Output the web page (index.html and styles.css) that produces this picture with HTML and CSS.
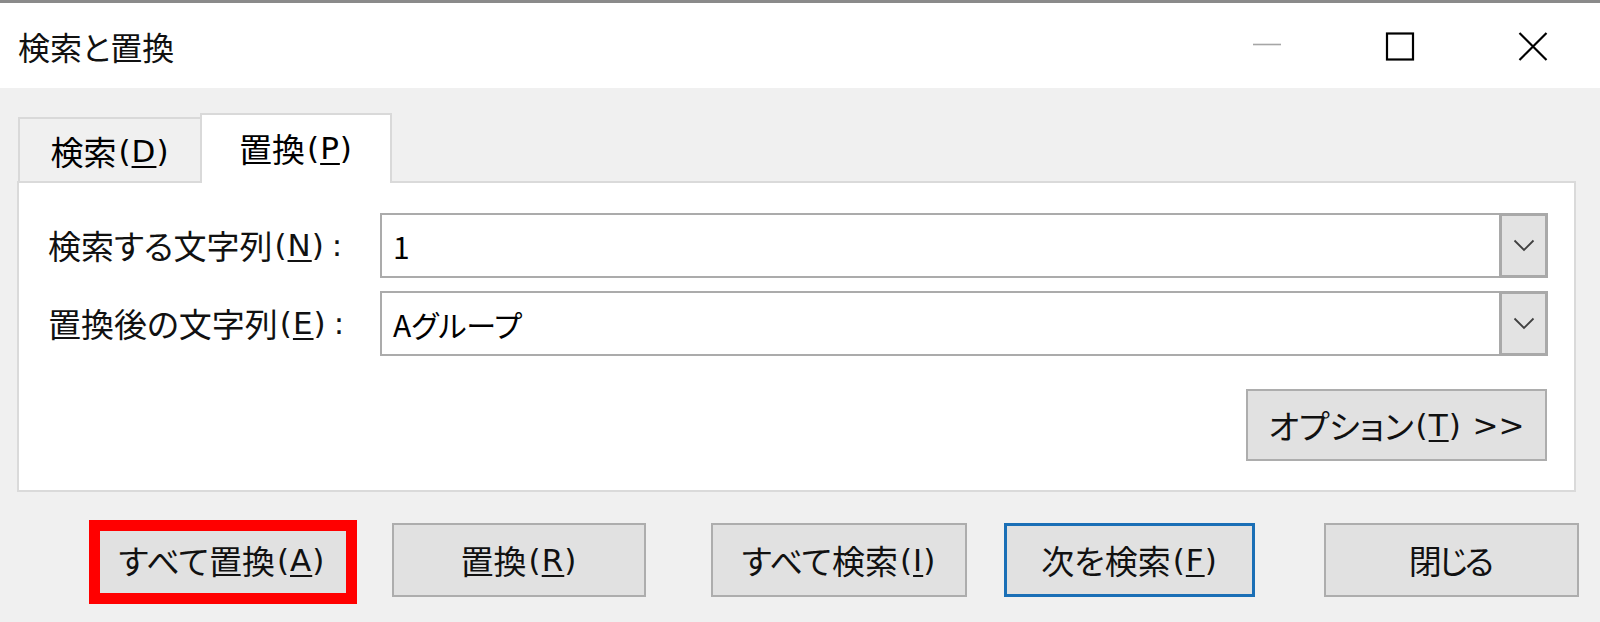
FILE: index.html
```html
<!DOCTYPE html>
<html lang="ja">
<head>
<meta charset="utf-8">
<title>検索と置換</title>
<link rel="stylesheet" href="styles.css">
</head>
<body>
<div class="window">
  <header class="titlebar">
    <div class="title">検索と置換</div>
    <div class="controls">
      <svg class="ctl" viewBox="0 0 30 30" width="30" height="30"><line x1="1" y1="13.5" x2="29" y2="13.5" stroke="#a6a6a6" stroke-width="1.6"/></svg>
      <svg class="ctl" viewBox="0 0 30 30" width="30" height="30"><rect x="2" y="2.5" width="26" height="26" fill="none" stroke="#000" stroke-width="2.2"/></svg>
      <svg class="ctl" viewBox="0 0 30 30" width="30" height="30"><path d="M1.5 2 L28.5 29 M28.5 2 L1.5 29" stroke="#000" stroke-width="2.2" fill="none"/></svg>
    </div>
  </header>
  <main class="content">
    <div class="tabs">
      <div class="tab">検索<span class="key">(<u>D</u>)</span></div>
      <div class="tab tab-active">置換<span class="key">(<u>P</u>)</span></div>
    </div>
    <section class="panel">
      <div class="form">
        <div class="label">検索する文字列<span class="key">(<u>N</u>)<span class="colon">:</span></span></div>
        <div class="combo">
          <div class="combo-text">1</div>
          <div class="combo-btn"><svg viewBox="0 0 22 13" width="22" height="13"><path d="M1.5 1.5 L11 11 L20.5 1.5" fill="none" stroke="#404040" stroke-width="1.8"/></svg></div>
        </div>
        <div class="label">置換後の文字列<span class="key">(<u>E</u>)<span class="colon">:</span></span></div>
        <div class="combo">
          <div class="combo-text">Aグループ</div>
          <div class="combo-btn"><svg viewBox="0 0 22 13" width="22" height="13"><path d="M1.5 1.5 L11 11 L20.5 1.5" fill="none" stroke="#404040" stroke-width="1.8"/></svg></div>
        </div>
      </div>
      <div class="options-row">
        <div class="btn btn-options">オプション<span class="key">(<u>T</u>) <span class="arrows">&gt;&gt;</span></span></div>
      </div>
    </section>
    <div class="actions">
      <div class="btn btn-all-replace highlight">すべて置換<span class="key">(<u>A</u>)</span></div>
      <div class="btn btn-replace">置換<span class="key">(<u>R</u>)</span></div>
      <div class="btn btn-find-all">すべて検索<span class="key">(<u>I</u>)</span></div>
      <div class="btn btn-find-next btn-default">次を検索<span class="key">(<u>F</u>)</span></div>
      <div class="btn btn-close"><span class="tight">閉じる</span></div>
    </div>
  </main>
</div>
</body>
</html>
```

FILE: styles.css
```css
* { box-sizing: border-box; }

html, body {
  margin: 0;
  padding: 0;
}

body {
  font-family: "Noto Sans CJK JP", "Noto Sans", sans-serif;
  font-feature-settings: "palt";
  color: #000;
  background: #f0f0f0;
}

u {
  text-decoration: underline;
  text-decoration-thickness: 2px;
  text-underline-offset: 4px;
}

.key {
  font-family: "DejaVu Sans", "Noto Sans CJK JP", sans-serif;
  font-size: 31px;
  letter-spacing: 1px;
  margin-left: 2px;
}

.colon {
  margin-left: 7px;
}

.arrows {
  letter-spacing: 0;
}

.tight {
  letter-spacing: -3px;
  margin-right: 3px;
}

.window {
  width: 1600px;
  height: 622px;
  border-top: 3px solid #8a8a8a;
  background: #f0f0f0;
  display: flex;
  flex-direction: column;
}

.titlebar {
  height: 85px;
  background: #fff;
  display: flex;
  align-items: center;
  padding-left: 18px;
}

.title {
  font-size: 32px;
  line-height: 1;
  color: #111;
}

.controls {
  margin-left: auto;
  display: flex;
  align-items: center;
  gap: 103px;
  padding-right: 52px;
}

.ctl { display: block; }

.content {
  padding: 25px 0 0 17px;
}

.tabs {
  display: flex;
  align-items: flex-end;
  margin-left: 1px;
}

.tab {
  font-size: 33px;
  line-height: 1;
  height: 64px;
  width: 182px;
  display: flex;
  align-items: center;
  justify-content: center;
  padding-top: 2px;
  border-top: 2px solid #d9d9d9;
  border-left: 2px solid #d9d9d9;
  background: #f0f0f0;
}

.tab-active {
  position: relative;
  z-index: 1;
  width: 192px;
  height: 70px;
  margin-bottom: -2px;
  padding-bottom: 4px;
  background: #fff;
  border-right: 2px solid #d9d9d9;
}

.panel {
  width: 1559px;
  background: #fff;
  border: 2px solid #dadada;
  padding: 30px 26px 29px 29px;
}

.form {
  display: grid;
  grid-template-columns: 332px 1fr;
  grid-auto-rows: 65px;
  row-gap: 13px;
}

.label {
  font-size: 33px;
  line-height: 1;
  display: flex;
  align-items: center;
  color: #111;
}

.combo {
  display: flex;
  border: 2px solid #ababab;
  background: #fff;
}

.combo-text {
  flex: 1;
  display: flex;
  align-items: center;
  padding-left: 11px;
  font-size: 30px;
  line-height: 1;
}

.combo-btn {
  width: 49px;
  margin: -2px -2px -2px 0;
  border: 3px solid #a9a9a9;
  background: #e3e3e3;
  display: flex;
  align-items: center;
  justify-content: center;
}

.combo-btn svg { display: block; }

.options-row {
  display: flex;
  justify-content: flex-end;
  margin-top: 33px;
  padding-right: 1px;
}

.btn {
  font-size: 33px;
  line-height: 1;
  background: #e1e1e1;
  border: 2px solid #adadad;
  display: flex;
  align-items: center;
  justify-content: center;
  color: #111;
}

.btn-options {
  width: 301px;
  height: 72px;
}

.actions {
  display: flex;
  margin-top: 31px;
}

.actions .btn { height: 74px; }

.btn-all-replace { width: 256px; margin-left: 77px; }
.btn-replace { width: 254px; margin-left: 42px; }
.btn-find-all { width: 256px; margin-left: 65px; }
.btn-find-next { width: 251px; margin-left: 37px; }
.btn-close { width: 255px; margin-left: 69px; }

.btn-default {
  border: 3px solid #1a6fb6;
}

.highlight {
  position: relative;
}

.highlight::after {
  content: "";
  position: absolute;
  top: -5px;
  left: -7px;
  right: -9px;
  bottom: -9px;
  border: 11px solid #ff0000;
  pointer-events: none;
}
```
